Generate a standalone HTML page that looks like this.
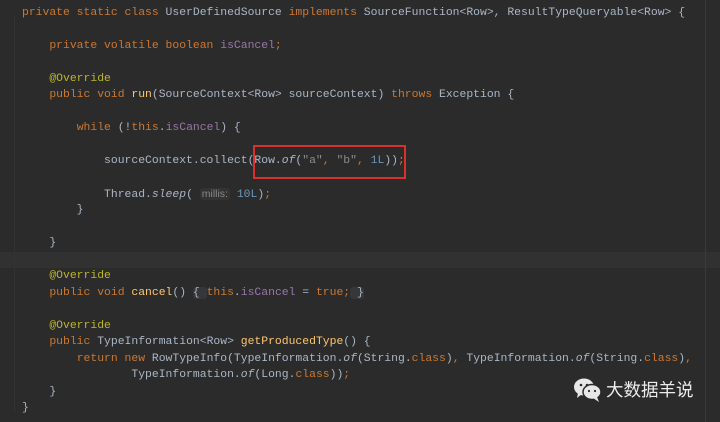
<!DOCTYPE html>
<html><head><meta charset="utf-8"><style>
body{margin:0;width:720px;height:422px;background:#2b2b2b;overflow:hidden;position:relative;font-family:"Liberation Mono",monospace;font-size:11.4px;color:#a9b7c6}
.l{position:absolute;left:22px;white-space:pre;line-height:16px;height:16px;top:0}
.k{color:#cc7832}.f{color:#9876aa}.a{color:#bbb529}.m{color:#ffc66d}.n{color:#6897bb}.s{color:#8a8f86}.i{font-style:italic}
.h{color:#888;font-family:"Liberation Sans",sans-serif;font-size:10.5px;background:#333;padding:0 2px;border-radius:3px}
.fold{background:#353739;border-radius:3px}
</style></head><body>
<div style="position:absolute;left:0;top:252px;width:720px;height:16px;background:#313131"></div>
<div style="position:absolute;left:705px;top:0;width:1px;height:422px;background:#3a3a3a"></div>
<div style="position:absolute;left:14px;top:16px;width:1px;height:396px;background:#333"></div>
<div class="l" style="top:5px"><span class="k">private static class </span>UserDefinedSource <span class="k">implements </span>SourceFunction&lt;Row&gt;, ResultTypeQueryable&lt;Row&gt; {</div>
<div class="l" style="top:38px">    <span class="k">private volatile boolean </span><span class="f">isCancel</span><span class="k">;</span></div>
<div class="l" style="top:71px">    <span class="a">@Override</span></div>
<div class="l" style="top:87px">    <span class="k">public void </span><span class="m">run</span>(SourceContext&lt;Row&gt; sourceContext) <span class="k">throws </span>Exception {</div>
<div class="l" style="top:120px">        <span class="k">while </span>(!<span class="k">this</span>.<span class="f">isCancel</span>) {</div>
<div class="l" style="top:153px">            sourceContext.collect(Row.<span class="i">of</span>(<span class="s">"a"</span><span class="k">, </span><span class="s">"b"</span><span class="k">, </span><span class="n">1L</span>))<span class="k">;</span></div>
<div class="l" style="top:186px">            Thread.<span class="i">sleep</span>( <span class="h">millis:</span> <span class="n">10L</span>)<span class="k">;</span></div>
<div class="l" style="top:202px">        }</div>
<div class="l" style="top:235px">    }</div>
<div class="l" style="top:268px">    <span class="a">@Override</span></div>
<div class="l" style="top:285px">    <span class="k">public void </span><span class="m">cancel</span>() <span class="fold">{ </span><span class="k">this</span>.<span class="f">isCancel </span>= <span class="k">true;</span><span class="fold"> }</span></div>
<div class="l" style="top:318px">    <span class="a">@Override</span></div>
<div class="l" style="top:334px">    <span class="k">public </span>TypeInformation&lt;Row&gt; <span class="m">getProducedType</span>() {</div>
<div class="l" style="top:351px">        <span class="k">return new </span>RowTypeInfo(TypeInformation.<span class="i">of</span>(String.<span class="k">class</span>)<span class="k">, </span>TypeInformation.<span class="i">of</span>(String.<span class="k">class</span>)<span class="k">,</span></div>
<div class="l" style="top:367px">                TypeInformation.<span class="i">of</span>(Long.<span class="k">class</span>))<span class="k">;</span></div>
<div class="l" style="top:384px">    }</div>
<div class="l" style="top:400px">}</div>
<div style="position:absolute;left:253px;top:145px;width:153px;height:34px;border:2px solid #d8302c;box-sizing:border-box"></div>
<svg style="position:absolute;left:573px;top:377px" width="30" height="26" viewBox="0 0 30 26">
<ellipse cx="11" cy="10" rx="10" ry="8.5" fill="#e8e8e8"/><path d="M5 16 L4 21 L9 17Z" fill="#e8e8e8"/>
<ellipse cx="19" cy="15" rx="9" ry="7.5" fill="#e8e8e8" stroke="#2b2b2b" stroke-width="1.5"/><path d="M24 20 L26 25 L20 21Z" fill="#e8e8e8"/>
<circle cx="8" cy="8" r="1.3" fill="#2b2b2b"/><circle cx="14" cy="8" r="1.3" fill="#2b2b2b"/>
<circle cx="16" cy="14" r="1.1" fill="#2b2b2b"/><circle cx="22" cy="14" r="1.1" fill="#2b2b2b"/></svg>
<div style="position:absolute;left:606px;top:378px;color:#ececec;font-family:'Noto Sans CJK SC',sans-serif;font-size:17.5px;line-height:24px">大数据羊说</div>
</body></html>
